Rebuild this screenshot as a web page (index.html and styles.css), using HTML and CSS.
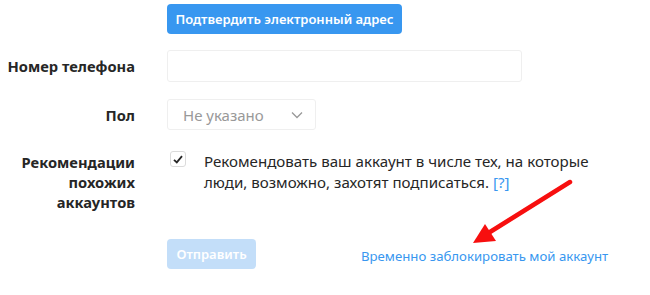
FILE: index.html
```html
<!DOCTYPE html>
<html lang="ru">
<head>
<meta charset="utf-8">
<link rel="stylesheet" href="styles.css">
</head>
<body>
<div class="page">
  <form class="form">
    <div class="row row-confirm">
      <div class="label"></div>
      <div class="field"><button type="button" class="btn btn-primary">Подтвердить электронный адрес</button></div>
    </div>
    <div class="row row-phone">
      <div class="label">Номер телефона</div>
      <div class="field"><input class="input" type="text"></div>
    </div>
    <div class="row row-gender">
      <div class="label">Пол</div>
      <div class="field">
        <div class="select">
          <span class="select-text">Не указано</span>
          <svg class="chev" width="12" height="8" viewBox="0 0 12 8"><path d="M1 1.5 L6 6.5 L11 1.5" fill="none" stroke="#999" stroke-width="1.3"/></svg>
        </div>
      </div>
    </div>
    <div class="row row-rec">
      <div class="label multi">Рекомендации<br>похожих<br>аккаунтов</div>
      <div class="field check-field">
        <span class="checkbox"><svg width="10" height="9" viewBox="0 0 10 9"><path d="M1 4.8 L3.8 7.4 L9 1.2" fill="none" stroke="#262626" stroke-width="1.8"/></svg></span>
        <p class="check-text">Рекомендовать ваш аккаунт в числе тех, на которые люди, возможно, захотят подписаться. <a class="help">[?]</a></p>
      </div>
    </div>
    <div class="row row-submit">
      <div class="label"></div>
      <div class="field submit-field">
        <button type="button" class="btn btn-disabled">Отправить</button>
        <a class="link">Временно заблокировать мой аккаунт</a>
      </div>
    </div>
  </form>
  <svg class="arrow" width="650" height="295" viewBox="0 0 650 295">
    <line x1="570" y1="182" x2="490" y2="232" stroke="#f70f0f" stroke-width="4.5" stroke-linecap="round"/>
    <polygon points="473,243 485,224 496,241" fill="#f70f0f"/>
  </svg>
</div>
</body>
</html>
```
FILE: styles.css
```css
html, body {
  margin: 0;
  padding: 0;
  background: #ffffff;
}
.page {
  position: relative;
  width: 650px;
  height: 295px;
  overflow: hidden;
  font-family: "Noto Sans", "Open Sans", sans-serif;
  font-size: 14px;
  color: #262626;
}
.form {
  display: flex;
  flex-direction: column;
  padding-top: 4px;
}
.row {
  display: flex;
  align-items: center;
}
.label {
  width: 135px;
  flex: none;
  text-align: right;
  font-weight: 700;
  font-size: 14.7px;
  margin-right: 32px;
}
.label.multi {
  align-self: flex-start;
  line-height: 20px;
  margin-top: 2px;
}
.field {
  flex: none;
}
.row-phone { margin-top: 16px; }
.row-gender { margin-top: 17px; }
.row-rec { margin-top: 20px; align-items: flex-start; }
.row-submit { margin-top: 27px; }
.btn {
  border: none;
  border-radius: 4px;
  height: 30px;
  padding: 0;
  color: #fff;
  font-family: inherit;
  font-weight: 600;
  font-size: 13px;
  line-height: 30px;
  white-space: nowrap;
  display: block;
  text-align: center;
}
.btn-primary { background: #3897f0; width: 235px; }
.btn-disabled { background: #c3def9; width: 89px; }
.input {
  box-sizing: border-box;
  width: 355px;
  height: 32px;
  border: 1px solid #efefef;
  border-radius: 3px;
  margin: 0;
  padding: 0;
  display: block;
}
.select {
  box-sizing: border-box;
  width: 149px;
  height: 31px;
  border: 1px solid #efefef;
  border-radius: 3px;
  display: flex;
  align-items: center;
  justify-content: space-between;
  padding: 0 12px 0 15px;
}
.select-text {
  color: #999;
  font-size: 15px;
}
.chev { display: block; }
.check-field {
  display: flex;
  align-items: flex-start;
}
.checkbox {
  box-sizing: border-box;
  width: 16px;
  height: 16px;
  margin: 1px 18px 0 3px;
  border: 1px solid #dbdbdb;
  border-radius: 3px;
  display: flex;
  align-items: center;
  justify-content: center;
  flex: none;
}
.checkbox svg { display: block; }
.check-text {
  margin: 0;
  width: 400px;
  font-size: 15.1px;
  line-height: 21px;
  margin-top: 1px;
}
.help { color: #3897f0; }
.submit-field {
  display: flex;
  align-items: center;
}
.link {
  color: #3897f0;
  font-size: 13.2px;
  margin-left: 105px;
  margin-top: 4px;
}
.arrow {
  position: absolute;
  left: 0;
  top: 0;
  pointer-events: none;
}
```
